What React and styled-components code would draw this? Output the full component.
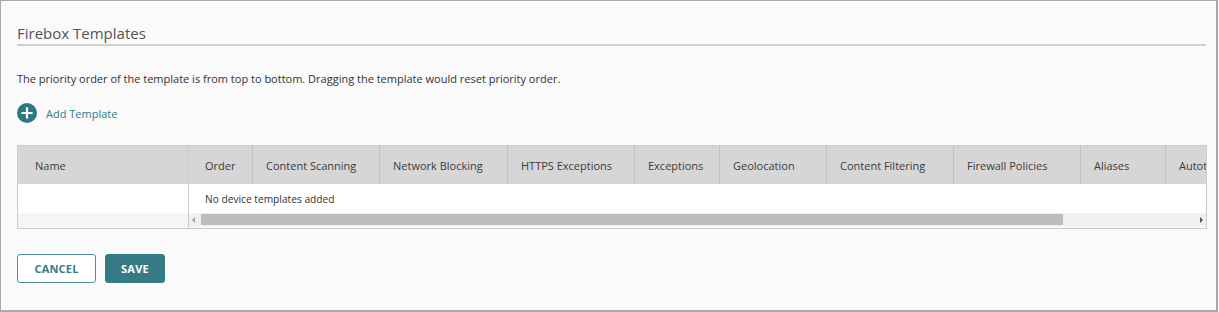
import styled, { createGlobalStyle } from "styled-components";

const GlobalStyle = createGlobalStyle`
    html, body {
        margin: 0;
        padding: 0;
        background: #ffffff;
    }
    * {
        box-sizing: border-box;
    }
`;

const columns = [
    { label: "Order", width: 64, pad: 16 },
    { label: "Content Scanning", width: 127 },
    { label: "Network Blocking", width: 128 },
    { label: "HTTPS Exceptions", width: 127 },
    { label: "Exceptions", width: 85 },
    { label: "Geolocation", width: 107 },
    { label: "Content Filtering", width: 127 },
    { label: "Firewall Policies", width: 127 },
    { label: "Aliases", width: 85 },
    { label: "Autotask", width: 120, last: true },
];

const App = () => {
    return (
        <>
            <GlobalStyle />
            <Page>
                <Title>Firebox Templates</Title>
                <Description>
                    The priority order of the template is from top to bottom. Dragging the template would reset priority order.
                </Description>
                <AddRow>
                    <PlusIcon width="20" height="20" viewBox="0 0 20 20">
                        <circle cx="10" cy="10" r="10" fill="#2f7883" />
                        <path d="M10 5.2v9.6M5.2 10h9.6" stroke="#fff" strokeWidth="2.2" strokeLinecap="round" />
                    </PlusIcon>
                    <AddLabel>Add Template</AddLabel>
                </AddRow>

                <Table>
                    <FrozenColumn>
                        <HeaderCell $pad={17}>Name</HeaderCell>
                        <BodyCell />
                        <FrozenFooter />
                    </FrozenColumn>
                    <ScrollArea>
                        <HeaderRow>
                            {columns.map((col) => (
                                <HeaderCell key={col.label} $width={col.width} $pad={col.pad} $divider={!col.last}>
                                    {col.label}
                                </HeaderCell>
                            ))}
                        </HeaderRow>
                        <BodyCell $pad={16}>No device templates added</BodyCell>
                        <ScrollBar>
                            <Arrow $dir="left" />
                            <Thumb />
                            <Arrow $dir="right" />
                        </ScrollBar>
                    </ScrollArea>
                </Table>

                <Actions>
                    <Button $width={79}>CANCEL</Button>
                    <Button $width={60} $primary>SAVE</Button>
                </Actions>
            </Page>
        </>
    );
};

export default App;

const Page = styled.div`
    width: 1218px;
    height: 312px;
    border: 1px solid #a9a9a9;
    border-right-width: 2px;
    border-bottom-width: 2px;
    background: #fafafa;
    padding: 22px 10px 0 16px;

    font-family: "Open Sans", "Liberation Sans", sans-serif;
    color: #333;
`;

const Title = styled.div`
    height: 23px;
    border-bottom: 2px solid #cfcfcf;

    font-size: 15px;
    line-height: 20px;
    color: #555;
`;

const Description = styled.div`
    margin-top: 24px;
    font-size: 11px;
    line-height: 18px;
    color: #333;
`;

const AddRow = styled.div`
    display: flex;
    align-items: center;
    gap: 9px;
    margin-top: 15px;
    height: 20px;
    cursor: pointer;
`;

const PlusIcon = styled.svg`
    display: block;
    flex: none;
`;

const AddLabel = styled.span`
    font-size: 11px;
    color: #2d7d88;
`;

const Table = styled.div`
    display: flex;
    margin-top: 22px;
    width: 1190px;
    border: 1px solid #cccccc;
    background: #ffffff;
    overflow: hidden;
`;

const FrozenColumn = styled.div`
    display: flex;
    flex-direction: column;
    width: 171px;
    flex: none;
    border-right: 1px solid #cccccc;
`;

const FrozenFooter = styled.div`
    height: 15px;
    background: #f5f5f5;
`;

const ScrollArea = styled.div`
    display: flex;
    flex-direction: column;
    flex: 1;
    min-width: 0;
    overflow: hidden;
`;

const HeaderRow = styled.div`
    display: flex;
    width: max-content;
`;

const HeaderCell = styled.div`
    display: flex;
    align-items: center;
    flex: none;
    width: ${({ $width }) => ($width ? `${$width}px` : "auto")};
    height: 38px;
    padding-left: ${({ $pad }) => $pad ?? 13}px;
    background: #d6d6d6;
    border-right: ${({ $divider }) => ($divider ? "1px solid #c2c2c2" : "none")};

    font-size: 11px;
    color: #3c3c3c;
    white-space: nowrap;
`;

const BodyCell = styled.div`
    display: flex;
    align-items: center;
    height: 29px;
    padding-left: ${({ $pad }) => $pad ?? 0}px;
    background: #ffffff;

    font-size: 10.2px;
    color: #333;
    white-space: nowrap;
`;

const ScrollBar = styled.div`
    display: flex;
    align-items: center;
    height: 15px;
    background: #f0f0f0;
    border-bottom: 2px solid #f8f8f8;
`;

const Arrow = styled.div`
    width: 12px;
    height: 13px;
    flex: none;
    position: relative;

    &::after {
        content: "";
        position: absolute;
        top: 4px;
        ${({ $dir }) => ($dir === "left" ? "left: 3px;" : "right: 3px;")}
        border-top: 3px solid transparent;
        border-bottom: 3px solid transparent;
        ${({ $dir }) => ($dir === "left" ? "border-right: 3px solid #a0a0a0;" : "border-left: 3px solid #505050;")}
    }
`;

const Thumb = styled.div`
    width: 862px;
    height: 11px;
    margin-right: auto;
    background: #bdbdbd;
`;

const Actions = styled.div`
    display: flex;
    gap: 9px;
    margin-top: 25px;
`;

const Button = styled.button`
    width: ${({ $width }) => $width}px;
    height: 29px;
    padding: 0;
    border-radius: 3px;
    border: 1px solid ${({ $primary }) => ($primary ? "#357a85" : "#4f8f99")};
    background: ${({ $primary }) => ($primary ? "#357a85" : "#ffffff")};
    color: ${({ $primary }) => ($primary ? "#ffffff" : "#357a85")};

    font-family: "Open Sans", "Liberation Sans", sans-serif;
    font-size: 11px;
    font-weight: 700;
    letter-spacing: 0.2px;
    cursor: pointer;
`;
